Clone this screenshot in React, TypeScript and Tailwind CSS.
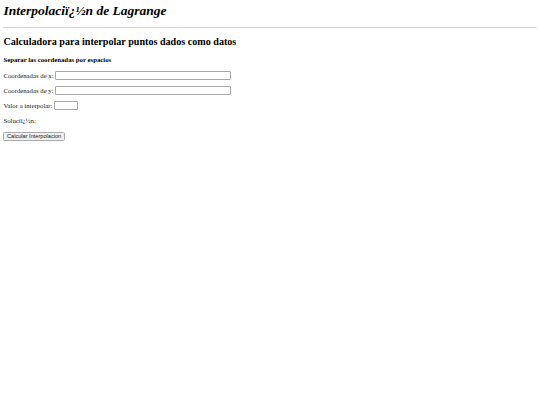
export default function App() {
  const serif = { fontFamily: '"Liberation Serif", "Times New Roman", serif' };
  return (
    <div className="min-h-[405px] bg-white px-[3.375px] pt-[3.375px] text-black" style={serif}>
      <h1 className="m-0 text-[13.5px] font-bold italic leading-[1.15]">Interpolaciï¿½n de Lagrange</h1>
      <hr className="mt-[8.6px] mb-0 h-[0.85px] border-0 bg-[#d4d4d4]" />
      <h2 className="mt-[7.8px] mb-0 text-[10.125px] font-bold leading-[1.15]">
        Calculadora para interpolar puntos dados como datos
      </h2>
      <h4 className="mt-[8.3px] mb-0 text-[6.75px] font-bold leading-[1.15]">Separar las coordenadas por espacios</h4>
      <div className="mt-[7.3px] flex flex-col gap-[6.24px] text-[6.75px] leading-[1.15] text-[#222]">
        <div className="flex h-[8.86px] items-center">
          <span>Coordenadas de x:</span>
          <span className="ml-[1.7px] inline-block h-[8.6px] w-[176px] rounded-[1px] border border-[#a8a8a8] bg-white" />
        </div>
        <div className="flex h-[8.86px] items-center">
          <span>Coordenadas de y:</span>
          <span className="ml-[1.7px] inline-block h-[8.6px] w-[176px] rounded-[1px] border border-[#a8a8a8] bg-white" />
        </div>
        <div className="flex h-[8.86px] items-center">
          <span>Valor a interpolar:</span>
          <span className="ml-[1.7px] inline-block h-[8.6px] w-[24px] rounded-[1px] border border-[#a8a8a8] bg-white" />
        </div>
        <div className="flex h-[8.86px] items-center">
          <span>Soluciï¿½n:</span>
        </div>
        <div className="flex h-[8.86px] items-center pt-[1px]">
          <button
            className="h-[9.4px] rounded-[1.5px] border border-[#ababab] bg-[#efefef] px-[2.6px] text-[5.625px] leading-none text-[#222]"
            style={{ fontFamily: '"Liberation Sans", Arial, sans-serif' }}
          >
            Calcular Interpolacion
          </button>
        </div>
      </div>
    </div>
  );
}
